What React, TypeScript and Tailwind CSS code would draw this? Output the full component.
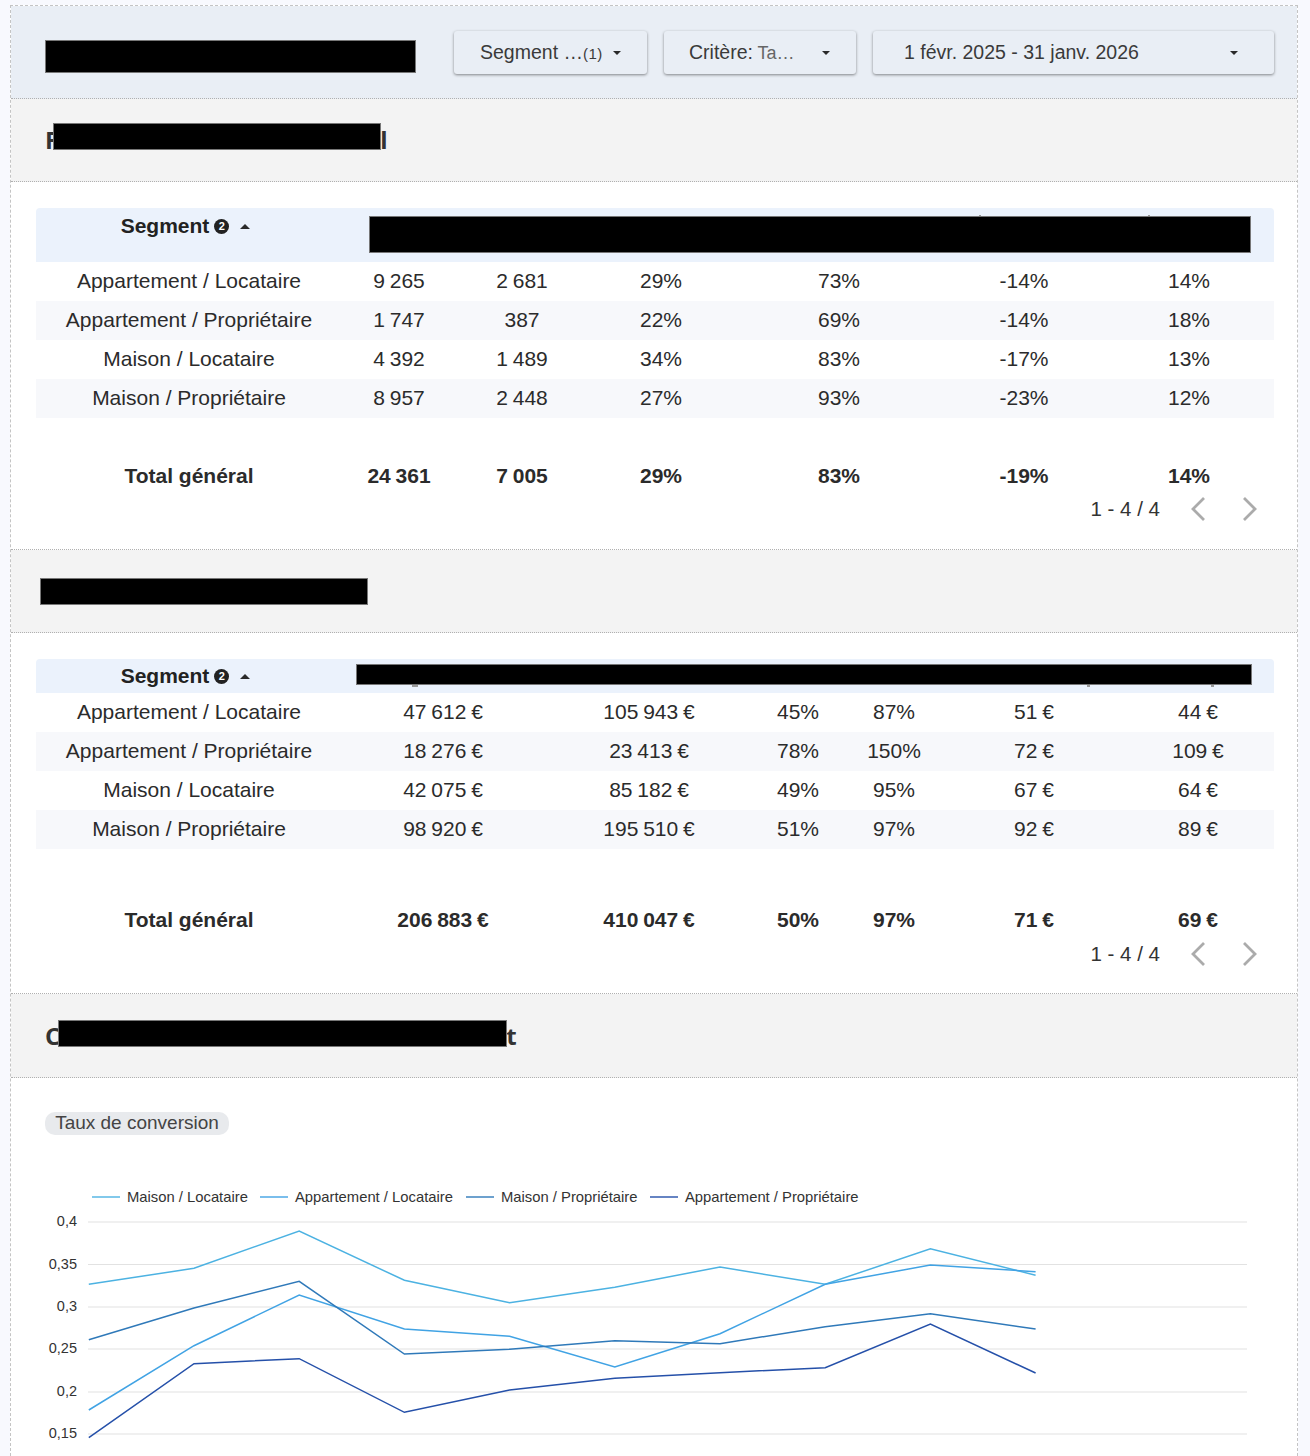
const SERIES = [
  { name: 'Maison / Locataire', color: '#4cb2e2', x: 92, ys: [1284.3, 1268.3, 1231, 1280.3, 1302.7, 1287.3, 1267, 1284.3, 1248.7, 1275.3] },
  { name: 'Appartement / Locataire', color: '#41a3e4', x: 260, ys: [1410, 1345.7, 1295, 1329, 1336.3, 1367, 1333.7, 1284.3, 1265, 1271.7] },
  { name: 'Maison / Propriétaire', color: '#2f79b9', x: 466, ys: [1339.7, 1308, 1281.3, 1354, 1349.3, 1340.7, 1343.7, 1326.7, 1313.7, 1329] },
  { name: 'Appartement / Propriétaire', color: '#2550a9', x: 650, ys: [1437.7, 1363.7, 1358.7, 1412.3, 1390, 1378.3, 1372.7, 1367.7, 1324, 1373] },
]

const TICKS = [
  { label: '0,4', y: 1222 },
  { label: '0,35', y: 1264.5 },
  { label: '0,3', y: 1307 },
  { label: '0,25', y: 1349 },
  { label: '0,2', y: 1392 },
  { label: '0,15', y: 1434 },
]

const SEGMENTS = [
  'Appartement / Locataire',
  'Appartement / Propriétaire',
  'Maison / Locataire',
  'Maison / Propriétaire',
]

const VOLUME_ROWS = [
  ['9 265', '2 681', '29%', '73%', '-14%', '14%'],
  ['1 747', '387', '22%', '69%', '-14%', '18%'],
  ['4 392', '1 489', '34%', '83%', '-17%', '13%'],
  ['8 957', '2 448', '27%', '93%', '-23%', '12%'],
]
const VOLUME_TOTAL = ['24 361', '7 005', '29%', '83%', '-19%', '14%']

const VALUE_ROWS = [
  ['47 612 €', '105 943 €', '45%', '87%', '51 €', '44 €'],
  ['18 276 €', '23 413 €', '78%', '150%', '72 €', '109 €'],
  ['42 075 €', '85 182 €', '49%', '95%', '67 €', '64 €'],
  ['98 920 €', '195 510 €', '51%', '97%', '92 €', '89 €'],
]
const VALUE_TOTAL = ['206 883 €', '410 047 €', '50%', '97%', '71 €', '69 €']

const VOLUME_GRID = 'grid grid-cols-[306px_114px_132px_146px_210px_160px_170px]'
const VALUE_GRID = 'grid grid-cols-[306px_202px_210px_88px_104px_176px_152px]'

function CaretDown() {
  return (
    <svg width="8" height="4" viewBox="0 0 8 4" className="shrink-0">
      <path d="M0 0L4 4L8 0Z" fill="#2a2a2a" />
    </svg>
  )
}

function CaretUp() {
  return (
    <svg width="10" height="5" viewBox="0 0 10 5" className="shrink-0">
      <path d="M0 5L5 0L10 5Z" fill="#2a2a2a" />
    </svg>
  )
}

function FilterButton({ width, children, padding }: { width: string; children: React.ReactNode; padding: string }) {
  return (
    <div className={`${width} flex h-[43px] items-center justify-between rounded-[3px] bg-[#e9eef5] shadow-[0_1px_3px_rgba(0,0,0,0.45)] ${padding}`}>
      <div className="whitespace-nowrap text-[19.5px] text-[#3a3a3a]">{children}</div>
      <CaretDown />
    </div>
  )
}

function SectionTitle({ first, last, barClass, height = 'h-[83px]' }: { first: string; last: string; barClass: string; height?: string }) {
  return (
    <div className={`${height} flex items-center border-b border-dotted border-[#b0b0b0] bg-[#f3f3f3] pl-[34px]`}>
      <div className="flex items-center font-['Open_Sans',sans-serif] text-[24px] font-bold text-[#333]">
        <span>{first}</span>
        <span className={`${barClass} h-[27px] border border-[#777] bg-black`} />
        <span>{last}</span>
      </div>
    </div>
  )
}

function SegmentHead({ className }: { className?: string }) {
  return (
    <div className={`flex items-center justify-center pr-[7px] text-[21px] font-bold leading-[24px] text-[#222] ${className ?? ''}`}>
      <span>Segment</span>
      <span className="ml-[5px] flex h-[15px] w-[15px] items-center justify-center rounded-full bg-[#222] text-[11px] leading-none text-white">2</span>
      <span className="ml-[11px]"><CaretUp /></span>
    </div>
  )
}

function Pager({ className }: { className?: string }) {
  return (
    <div className={`flex h-[26px] items-center justify-end pr-[16px] text-[20.5px] text-[#333] ${className ?? ''}`}>
      <span className="mr-[30px]">1 - 4 / 4</span>
      <svg width="16" height="26" viewBox="0 0 16 26" className="mr-[36px]">
        <path d="M14 2L3 13L14 24" fill="none" stroke="#ababab" strokeWidth="2.8" />
      </svg>
      <svg width="16" height="26" viewBox="0 0 16 26">
        <path d="M2 2L13 13L2 24" fill="none" stroke="#ababab" strokeWidth="2.8" />
      </svg>
    </div>
  )
}

function DataTable({ grid, rows, total, gapClass }: { grid: string; rows: string[][]; total: string[]; gapClass: string }) {
  return (
    <div>
      {rows.map((row, i) => (
        <div key={SEGMENTS[i]} className={`${grid} h-[39px] items-center pb-[2px] text-center text-[21px] text-[#2b2b2b] ${i % 2 === 1 ? 'bg-[#f7f8fb]' : ''}`}>
          <div>{SEGMENTS[i]}</div>
          {row.map((cell, j) => (
            <div key={j} className="[word-spacing:-1px]">{cell}</div>
          ))}
        </div>
      ))}
      <div className={`${grid} ${gapClass} h-[39px] items-center pb-[2px] text-center text-[21px] font-bold text-[#2b2b2b]`}>
        <div>Total général</div>
        {total.map((cell, j) => (
          <div key={j} className="[word-spacing:-1px]">{cell}</div>
        ))}
      </div>
    </div>
  )
}

function Chart() {
  const xAt = (i: number) => 88.8 + i * 105.2
  return (
    <svg width="1286" height="276" viewBox="11 1180 1286 276" className="block font-['Liberation_Sans',sans-serif]">
      {SERIES.map((s) => (
        <g key={s.name}>
          <line x1={s.x} x2={s.x + 28} y1="1197" y2="1197" stroke={s.color} strokeWidth="1.4" />
          <text x={s.x + 35} y="1202" fontSize="14.8" fill="#333">{s.name}</text>
        </g>
      ))}
      {TICKS.map((t) => (
        <g key={t.label}>
          <line x1="88" x2="1247" y1={t.y} y2={t.y} stroke="#e2e2e2" strokeWidth="1.2" />
          <text x="77" y={t.y + 4.4} fontSize="14.5" textAnchor="end" fill="#333">{t.label}</text>
        </g>
      ))}
      {SERIES.map((s) => (
        <polyline
          key={s.name}
          points={s.ys.map((y, i) => `${xAt(i)},${y}`).join(' ')}
          fill="none"
          stroke={s.color}
          strokeWidth="1.5"
        />
      ))}
    </svg>
  )
}

export default function App() {
  return (
    <div className="h-[1456px] w-[1310px] overflow-hidden bg-[#f8f9fe] pl-[10px] pt-[5px] font-['Liberation_Sans',sans-serif]">
      <div className="h-[1451px] w-[1288px] border-x border-t border-dashed border-[#c4c4c4] bg-white">
        <div className="flex h-[93px] items-start border-b border-dotted border-[#b0b0b0] bg-[#e9eef5] pl-[34px] pt-[25px]">
          <div className="mr-[38px] mt-[9px] h-[33px] w-[371px] border border-[#777] bg-black" />
          <div className="flex gap-[17px]">
            <FilterButton width="w-[193px]" padding="pl-[26px] pr-[26px]">
              Segment …<span className="text-[15px] tracking-[0.5px]">(1)</span>
            </FilterButton>
            <FilterButton width="w-[192px]" padding="pl-[25px] pr-[26px]">
              Critère:<span className="text-[18px] text-[#666]"> Ta…</span>
            </FilterButton>
            <FilterButton width="w-[401px]" padding="pl-[31px] pr-[36px]">
              1 févr. 2025 - 31 janv. 2026
            </FilterButton>
          </div>
        </div>

        <SectionTitle first="F" last="l" barClass="w-[328px] -ml-[5px] -mr-[1px] -translate-y-[4px]" />

        <div className="h-[368px] border-b border-dotted border-[#b0b0b0] pl-[25px] pr-[23px] pt-[26px]">
          <div className={`${VOLUME_GRID} relative h-[54px] rounded-t-[4px] bg-[#ebf2fc] pt-[6px]`}>
            <SegmentHead className="self-start" />
            <div className="absolute left-[333px] top-[8px] h-[37px] w-[882px] border border-[#777] bg-black">
              <span className="absolute -top-[2px] left-[609px] h-[1px] w-[2px] bg-[#999]" />
              <span className="absolute -top-[2px] left-[778px] h-[1px] w-[2px] bg-[#999]" />
            </div>
          </div>
          <DataTable grid={VOLUME_GRID} rows={VOLUME_ROWS} total={VOLUME_TOTAL} gapClass="mt-[39px]" />
          <Pager />
        </div>

        <SectionTitle first="" last="" barClass="w-[328px] -ml-[5px]" />

        <div className="h-[361px] border-b border-dotted border-[#b0b0b0] pl-[25px] pr-[23px] pt-[26px]">
          <div className={`${VALUE_GRID} relative h-[34px] items-center rounded-t-[4px] bg-[#ebf2fc]`}>
            <SegmentHead />
            <div className="absolute left-[320px] top-[5px] h-[21px] w-[896px] border border-[#777] bg-black">
              <span className="absolute -bottom-[3px] left-[55px] h-[2px] w-[6px] bg-[#999]" />
              <span className="absolute -bottom-[3px] left-[730px] h-[2px] w-[3px] bg-[#999]" />
              <span className="absolute -bottom-[3px] left-[854px] h-[2px] w-[3px] bg-[#999]" />
            </div>
          </div>
          <DataTable grid={VALUE_GRID} rows={VALUE_ROWS} total={VALUE_TOTAL} gapClass="mt-[52px]" />
          <Pager className="mt-[1px]" />
        </div>

        <SectionTitle first="C" last="t" barClass="w-[449px] -ml-[2px] -mr-[1px] -translate-y-[2px]" height="h-[84px]" />

        <div className="pt-[34px]">
          <div className="ml-[34px] flex h-[23px] w-[184px] items-center justify-center rounded-[10px] bg-[#e8eaed] text-[19px] text-[#444]">
            Taux de conversion
          </div>
          <div className="mt-[45px]">
            <Chart />
          </div>
        </div>
      </div>
    </div>
  )
}
